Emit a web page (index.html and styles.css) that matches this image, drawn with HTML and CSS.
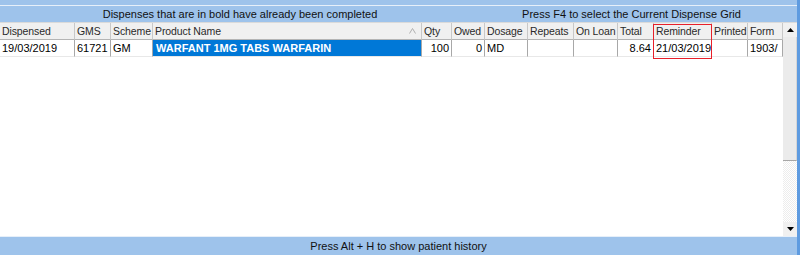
FILE: index.html
```html
<!DOCTYPE html>
<html>
<head>
    <meta charset="UTF-8">
    <title>Dispense Grid</title>
    <link rel="stylesheet" href="styles.css">
</head>
<body>
    <div class="window">
        <div class="top-band"></div>
        <div class="title-bar">
            <div class="title-left">Dispenses that are in bold have already been completed</div>
            <div class="title-right">Press F4 to select the Current Dispense Grid</div>
        </div>

        <div class="grid-area">
            <div class="grid">
                <div class="row header-row">
                    <div class="cell">Dispensed</div>
                    <div class="cell">GMS</div>
                    <div class="cell">Scheme</div>
                    <div class="cell sort-cell">Product Name
                        <svg class="sort-arrow" width="7" height="6" viewBox="0 0 7 6">
                            <path d="M0.5 5.5 L3.5 0.5 L6.5 5.5" fill="none" stroke="#B0B0B0" stroke-width="1"/>
                        </svg>
                    </div>
                    <div class="cell">Qty</div>
                    <div class="cell">Owed</div>
                    <div class="cell">Dosage</div>
                    <div class="cell">Repeats</div>
                    <div class="cell">On Loan</div>
                    <div class="cell">Total</div>
                    <div class="cell">Reminder</div>
                    <div class="cell">Printed</div>
                    <div class="cell">Form</div>
                </div>
                <div class="row data-row">
                    <div class="cell">19/03/2019</div>
                    <div class="cell">61721</div>
                    <div class="cell">GM</div>
                    <div class="cell selected">WARFANT 1MG TABS WARFARIN</div>
                    <div class="cell num">100</div>
                    <div class="cell num">0</div>
                    <div class="cell">MD</div>
                    <div class="cell"></div>
                    <div class="cell"></div>
                    <div class="cell num">8.64</div>
                    <div class="cell">21/03/2019</div>
                    <div class="cell"></div>
                    <div class="cell">1903/</div>
                </div>
                <div class="reminder-mark"></div>
            </div>

            <div class="scrollbar">
                <div class="scroll-btn">
                    <svg width="7" height="4" viewBox="0 0 7 4"><path d="M0 4 L3.5 0 L7 4 Z" fill="#000"/></svg>
                </div>
                <div class="scroll-thumb"></div>
                <div class="scroll-track"></div>
                <div class="scroll-btn">
                    <svg width="7" height="4" viewBox="0 0 7 4"><path d="M0 0 L3.5 4 L7 0 Z" fill="#000"/></svg>
                </div>
            </div>
        </div>

        <div class="bottom-bar">Press Alt + H to show patient history</div>
    </div>
</body>
</html>
```

FILE: styles.css
```css
:root {
    --bar-blue: #9EC3EB;
    --edge-blue: #5E9BE0;
    --grid-line: #A0A0A0;
}

body {
    margin: 0;
    padding: 0;
    font-family: "Liberation Sans", Arial, sans-serif;
    font-size: 11px;
    color: #000000;
    background-color: white;
}

.window {
    width: 800px;
    height: 255px;
    box-sizing: border-box;
    border-right: 3px solid var(--edge-blue);
    display: flex;
    flex-direction: column;
    overflow: hidden;
}

.top-band {
    height: 5px;
    background-color: var(--bar-blue);
    border-bottom: 1px solid #E6EFF9;
}

.title-bar {
    height: 16px;
    background-color: var(--bar-blue);
    display: grid;
    grid-template-columns: 480px 1fr;
    align-items: center;
    line-height: 16px;
    color: #111111;
}

.title-left,
.title-right {
    text-align: center;
    white-space: nowrap;
}

.title-right {
    padding-right: 14px;
}

.grid-area {
    flex: 1;
    display: flex;
    border-top: 1px solid #DADADA;
}

.grid {
    position: relative;
    width: 783px;
    background-color: white;
}

.row {
    display: grid;
    grid-template-columns: 75px 36px 42px 269px 30px 33px 43px 46px 44px 36px 58px 36px 35px;
    height: 17px;
}

.cell {
    box-sizing: border-box;
    border-right: 1px solid var(--grid-line);
    border-bottom: 1px solid #D0D0D0;
    padding: 0 2px;
    line-height: 16px;
    white-space: nowrap;
    overflow: hidden;
}

.header-row .cell {
    background-color: #F0F0F0;
    color: #2A2A2A;
    font-size: 10.5px;
    letter-spacing: -0.1px;
    padding: 0 1px 0 2px;
    border-right-color: #C8C8C8;
    border-bottom-color: #B4B4B4;
}

.sort-cell {
    display: flex;
    align-items: center;
    justify-content: space-between;
}

.sort-arrow {
    margin-right: 4px;
}

.data-row .cell {
    border-right-color: #A8A8A8;
    border-bottom-color: #E8E8E8;
}

.cell.num {
    text-align: right;
}

.cell.selected {
    background-color: #0078D7;
    color: white;
    font-weight: bold;
    font-size: 11px;
    padding-left: 3px;
}

.reminder-mark {
    position: absolute;
    left: 653px;
    top: 1px;
    width: 59px;
    height: 35px;
    box-sizing: border-box;
    border: 1px solid #E8202A;
}

.scrollbar {
    width: 14px;
    display: flex;
    flex-direction: column;
    background-color: white;
}

.scroll-btn {
    height: 14px;
    display: flex;
    align-items: center;
    justify-content: center;
    background-color: #F0F0F0;
}

.scroll-thumb {
    height: 123px;
    background-color: #EBEBEB;
    border-right: 1px solid #D6D6D6;
    border-bottom: 1px solid #A6A6A6;
}

.scroll-track {
    flex: 1;
    background-color: #F4F4F4;
    background-image: repeating-conic-gradient(#FFFFFF 0 25%, #EDEDED 0 50%);
    background-size: 2px 2px;
}

.bottom-bar {
    height: 18px;
    background-color: var(--bar-blue);
    border-top: 1px solid #E6EFF9;
    text-align: center;
    line-height: 18px;
    color: #111111;
}
```
